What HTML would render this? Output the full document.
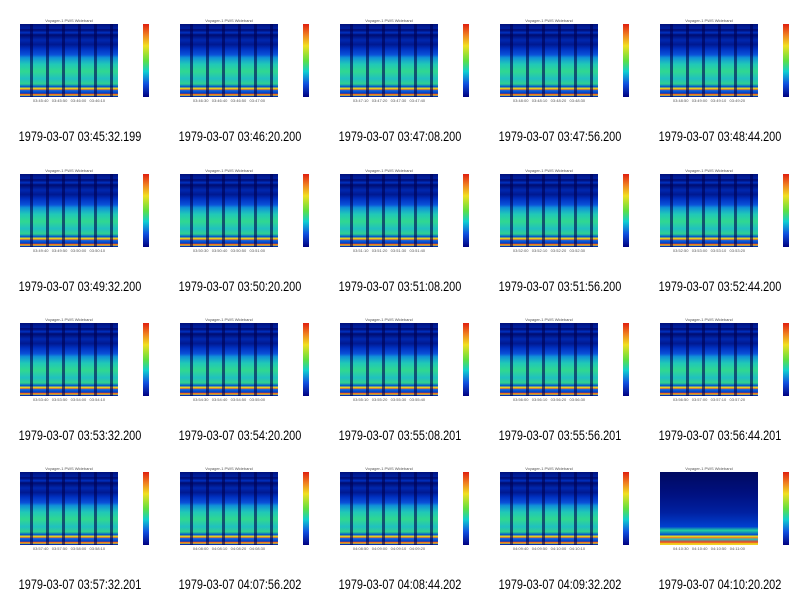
<!DOCTYPE html>
<html><head><meta charset="utf-8"><style>
body{margin:0;width:800px;height:596px;background:#fff;position:relative;overflow:hidden}
.c{position:absolute;width:160px;height:149px}
.t{position:absolute;left:20px;top:18px;width:98px;text-align:center;font:4px "Liberation Sans",sans-serif;color:#555}
.p{position:absolute;left:20px;top:24px;width:98px;height:73px;
background:
repeating-linear-gradient(90deg,rgba(0,0,40,0) 0 10px,rgba(0,0,80,.6) 10px 13px,rgba(0,0,40,0) 13px 16px),
linear-gradient(180deg,#00107a 0,#0020a0 6%,#000a70 8%,#0030c0 12%,#000c70 15%,#0028b0 22%,#001890 28%,#0030c0 34%,#0a50d8 42%,#1090d8 46%,#20c8b8 55%,#30d890 65%,#20c0c0 75%,#30d090 82%,#0050d0 86%,#e0e020 88%,#f08020 89.5%,#1060e0 91%,#0040c0 95%,#f04020 96%,#f0d020 97.5%,#0030b0 99%)}
.x{position:absolute;left:20px;top:98px;width:98px;font:4px "Liberation Sans",sans-serif;color:#555;text-align:center;line-height:5px;white-space:nowrap}
.cb{position:absolute;left:143px;top:24px;width:6px;height:73px;background:linear-gradient(180deg,#e02010,#f08020 15%,#f0e020 30%,#60e040 50%,#10d0d0 65%,#1050e0 82%,#000080)}
.cap{position:absolute;left:0;top:128px;width:160px;text-align:center;font:14px "Liberation Sans",sans-serif;color:#000;transform:scaleX(.78);white-space:nowrap}
</style></head><body>
<div class="c" style="left:0;top:0"><div class="t">Voyager-1 PWS Wideband</div><div class="p"></div><div class="x">03:45:40 &nbsp; 03:45:50 &nbsp; 03:46:00 &nbsp; 03:46:10</div><div class="cb"></div><div class="cap">1979-03-07 03:45:32.199</div></div>
<div class="c" style="left:160px;top:0"><div class="t">Voyager-1 PWS Wideband</div><div class="p"></div><div class="x">03:46:30 &nbsp; 03:46:40 &nbsp; 03:46:50 &nbsp; 03:47:00</div><div class="cb"></div><div class="cap">1979-03-07 03:46:20.200</div></div>
<div class="c" style="left:320px;top:0"><div class="t">Voyager-1 PWS Wideband</div><div class="p"></div><div class="x">03:47:10 &nbsp; 03:47:20 &nbsp; 03:47:30 &nbsp; 03:47:40</div><div class="cb"></div><div class="cap">1979-03-07 03:47:08.200</div></div>
<div class="c" style="left:480px;top:0"><div class="t">Voyager-1 PWS Wideband</div><div class="p"></div><div class="x">03:48:00 &nbsp; 03:48:10 &nbsp; 03:48:20 &nbsp; 03:48:30</div><div class="cb"></div><div class="cap">1979-03-07 03:47:56.200</div></div>
<div class="c" style="left:640px;top:0"><div class="t">Voyager-1 PWS Wideband</div><div class="p"></div><div class="x">03:48:50 &nbsp; 03:49:00 &nbsp; 03:49:10 &nbsp; 03:49:20</div><div class="cb"></div><div class="cap">1979-03-07 03:48:44.200</div></div>

<div class="c" style="left:0;top:149.5px"><div class="t">Voyager-1 PWS Wideband</div><div class="p"></div><div class="x">03:49:40 &nbsp; 03:49:50 &nbsp; 03:50:00 &nbsp; 03:50:10</div><div class="cb"></div><div class="cap">1979-03-07 03:49:32.200</div></div>
<div class="c" style="left:160px;top:149.5px"><div class="t">Voyager-1 PWS Wideband</div><div class="p"></div><div class="x">03:50:30 &nbsp; 03:50:40 &nbsp; 03:50:50 &nbsp; 03:51:00</div><div class="cb"></div><div class="cap">1979-03-07 03:50:20.200</div></div>
<div class="c" style="left:320px;top:149.5px"><div class="t">Voyager-1 PWS Wideband</div><div class="p"></div><div class="x">03:51:10 &nbsp; 03:51:20 &nbsp; 03:51:30 &nbsp; 03:51:40</div><div class="cb"></div><div class="cap">1979-03-07 03:51:08.200</div></div>
<div class="c" style="left:480px;top:149.5px"><div class="t">Voyager-1 PWS Wideband</div><div class="p"></div><div class="x">03:52:00 &nbsp; 03:52:10 &nbsp; 03:52:20 &nbsp; 03:52:30</div><div class="cb"></div><div class="cap">1979-03-07 03:51:56.200</div></div>
<div class="c" style="left:640px;top:149.5px"><div class="t">Voyager-1 PWS Wideband</div><div class="p"></div><div class="x">03:52:50 &nbsp; 03:53:00 &nbsp; 03:53:10 &nbsp; 03:53:20</div><div class="cb"></div><div class="cap">1979-03-07 03:52:44.200</div></div>

<div class="c" style="left:0;top:299px"><div class="t">Voyager-1 PWS Wideband</div><div class="p"></div><div class="x">03:53:40 &nbsp; 03:53:50 &nbsp; 03:54:00 &nbsp; 03:54:10</div><div class="cb"></div><div class="cap">1979-03-07 03:53:32.200</div></div>
<div class="c" style="left:160px;top:299px"><div class="t">Voyager-1 PWS Wideband</div><div class="p"></div><div class="x">03:54:30 &nbsp; 03:54:40 &nbsp; 03:54:50 &nbsp; 03:55:00</div><div class="cb"></div><div class="cap">1979-03-07 03:54:20.200</div></div>
<div class="c" style="left:320px;top:299px"><div class="t">Voyager-1 PWS Wideband</div><div class="p"></div><div class="x">03:55:10 &nbsp; 03:55:20 &nbsp; 03:55:30 &nbsp; 03:55:40</div><div class="cb"></div><div class="cap">1979-03-07 03:55:08.201</div></div>
<div class="c" style="left:480px;top:299px"><div class="t">Voyager-1 PWS Wideband</div><div class="p"></div><div class="x">03:56:00 &nbsp; 03:56:10 &nbsp; 03:56:20 &nbsp; 03:56:30</div><div class="cb"></div><div class="cap">1979-03-07 03:55:56.201</div></div>
<div class="c" style="left:640px;top:299px"><div class="t">Voyager-1 PWS Wideband</div><div class="p"></div><div class="x">03:56:50 &nbsp; 03:57:00 &nbsp; 03:57:10 &nbsp; 03:57:20</div><div class="cb"></div><div class="cap">1979-03-07 03:56:44.201</div></div>

<div class="c" style="left:0;top:448px"><div class="t">Voyager-1 PWS Wideband</div><div class="p"></div><div class="x">03:57:40 &nbsp; 03:57:50 &nbsp; 03:58:00 &nbsp; 03:58:10</div><div class="cb"></div><div class="cap">1979-03-07 03:57:32.201</div></div>
<div class="c" style="left:160px;top:448px"><div class="t">Voyager-1 PWS Wideband</div><div class="p"></div><div class="x">04:08:00 &nbsp; 04:08:10 &nbsp; 04:08:20 &nbsp; 04:08:30</div><div class="cb"></div><div class="cap">1979-03-07 04:07:56.202</div></div>
<div class="c" style="left:320px;top:448px"><div class="t">Voyager-1 PWS Wideband</div><div class="p"></div><div class="x">04:08:50 &nbsp; 04:09:00 &nbsp; 04:09:10 &nbsp; 04:09:20</div><div class="cb"></div><div class="cap">1979-03-07 04:08:44.202</div></div>
<div class="c" style="left:480px;top:448px"><div class="t">Voyager-1 PWS Wideband</div><div class="p"></div><div class="x">04:09:40 &nbsp; 04:09:50 &nbsp; 04:10:00 &nbsp; 04:10:10</div><div class="cb"></div><div class="cap">1979-03-07 04:09:32.202</div></div>
<div class="c" style="left:640px;top:448px"><div class="t">Voyager-1 PWS Wideband</div><div class="p" style="background:linear-gradient(180deg,#000a60 0,#001080 30%,#0020a0 55%,#0040d0 75%,#20d0a0 80%,#0050d0 86%,#e0e020 88%,#f08020 90%,#20c0c0 92%,#f04020 96%,#f0d020 98%)"></div><div class="x">04:10:30 &nbsp; 04:10:40 &nbsp; 04:10:50 &nbsp; 04:11:00</div><div class="cb"></div><div class="cap">1979-03-07 04:10:20.202</div></div>
</body></html>
